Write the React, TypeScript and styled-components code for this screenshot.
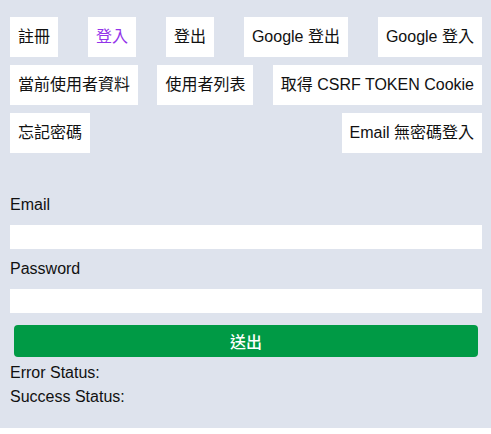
import React, { useState } from "react";
import styled, { createGlobalStyle } from "styled-components";

const GlobalStyle = createGlobalStyle`
  html, body {
    margin: 0;
    padding: 0;
    background: #ffffff;
  }
  body {
    font-family: "Liberation Sans", "Noto Sans CJK TC", Arial, sans-serif;
    color: #111111;
  }
`;

const Page = styled.div`
  background: #dee3ed;
  height: 428px;
  box-sizing: border-box;
  padding: 17px 9px 0 10px;
`;

const Nav = styled.nav`
  display: flex;
  flex-wrap: wrap;
  justify-content: space-between;
  row-gap: 8px;
`;

const NavButton = styled.button<{ $active?: boolean }>`
  font-family: inherit;
  font-size: 16px;
  line-height: 24px;
  padding: 8px;
  border: none;
  margin: 0;
  background: #ffffff;
  color: ${(p) => (p.$active ? "#9333ea" : "#111111")};
  cursor: pointer;
`;

const Form = styled.form`
  display: flex;
  flex-direction: column;
  margin-top: 40px;
`;

const Label = styled.label`
  font-size: 16px;
  line-height: 24px;
  margin-bottom: 8px;
`;

const Input = styled.input`
  height: 24px;
  border: none;
  padding: 0 6px;
  margin: 0 0 8px;
  background: #ffffff;
  font-family: inherit;
  font-size: 14px;
  outline: none;
`;

const Submit = styled.button`
  margin: 4px;
  height: 32px;
  border: none;
  border-radius: 4px;
  background: #009a45;
  color: #ffffff;
  font-family: "Noto Sans CJK TC", "Liberation Sans", sans-serif;
  font-size: 16px;
  font-weight: 500;
  cursor: pointer;
`;

const Status = styled.div`
  font-size: 16px;
  line-height: 24px;
`;

const links = [
  "註冊",
  "登入",
  "登出",
  "Google 登出",
  "Google 登入",
  "當前使用者資料",
  "使用者列表",
  "取得 CSRF TOKEN Cookie",
  "忘記密碼",
  "Email 無密碼登入",
];

export default function App() {
  const [active, setActive] = useState("登入");
  const [email, setEmail] = useState("");
  const [password, setPassword] = useState("");

  return (
    <>
      <GlobalStyle />
      <Page>
        <Nav>
          {links.map((l) => (
            <NavButton key={l} $active={l === active} onClick={() => setActive(l)}>
              {l}
            </NavButton>
          ))}
        </Nav>
        <Form onSubmit={(e) => e.preventDefault()}>
          <Label htmlFor="email">Email</Label>
          <Input id="email" value={email} onChange={(e) => setEmail(e.target.value)} />
          <Label htmlFor="password">Password</Label>
          <Input
            id="password"
            type="password"
            value={password}
            onChange={(e) => setPassword(e.target.value)}
          />
          <Submit type="submit">送出</Submit>
          <Status>Error Status: </Status>
          <Status>Success Status: </Status>
        </Form>
      </Page>
    </>
  );
}
